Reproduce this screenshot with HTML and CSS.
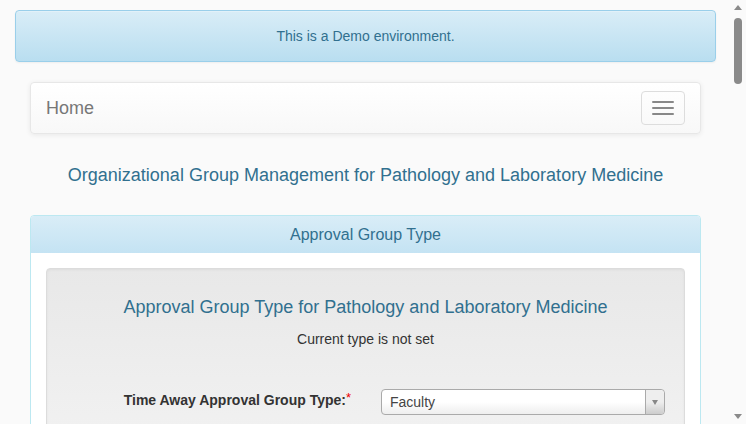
FILE: index.html
```html
<!DOCTYPE html>
<html>
<head>
<meta charset="utf-8">
<link rel="stylesheet" href="styles.css">
</head>
<body>
<div class="viewport">
  <div class="page">
    <div class="alert">This is a Demo environment.</div>
    <div class="main">
      <nav class="navbar">
        <span class="brand">Home</span>
        <button class="toggle" type="button" aria-label="Toggle navigation">
          <span class="bar"></span><span class="bar"></span><span class="bar"></span>
        </button>
      </nav>
      <h2 class="page-title">Organizational Group Management for Pathology and Laboratory Medicine</h2>
      <div class="panel">
        <div class="panel-heading">Approval Group Type</div>
        <div class="panel-body">
          <div class="well">
            <h3 class="well-title">Approval Group Type for Pathology and Laboratory Medicine</h3>
            <p class="current">Current type is not set</p>
            <div class="form-row">
              <label class="form-label">Time Away Approval Group Type:<span class="req">*</span></label>
              <div class="select">
                <span class="select-value">Faculty</span>
                <span class="select-arrow"><span class="caret"></span></span>
              </div>
            </div>
          </div>
        </div>
      </div>
    </div>
  </div>
  <div class="scrollbar">
    <span class="arrow-up"></span>
    <span class="thumb"></span>
    <span class="arrow-down"></span>
  </div>
</div>
</body>
</html>
```
FILE: styles.css
```css
html, body {
  margin: 0;
  padding: 0;
  height: 100%;
  overflow: hidden;
}
body {
  background: #fafafa;
  font-family: "Liberation Sans", Arial, Helvetica, sans-serif;
  font-size: 14px;
  color: #333;
}
.viewport {
  display: flex;
  height: 100%;
}
.page {
  flex: 1;
  padding: 10px 15px 0;
  min-width: 0;
}
.alert {
  height: 50px;
  border: 1px solid #9acfea;
  border-radius: 4px;
  background: linear-gradient(to bottom, #d9edf7 0, #b9def0 100%);
  color: #31708f;
  font-size: 14px;
  display: flex;
  align-items: center;
  justify-content: center;
  box-shadow: inset 0 1px 0 rgba(255,255,255,.25), 0 1px 2px rgba(0,0,0,.05);
  margin-bottom: 20px;
}
.main {
  padding: 0 15px;
}
.navbar {
  height: 50px;
  border: 1px solid #e7e7e7;
  border-radius: 4px;
  background: linear-gradient(to bottom, #fff 0, #f8f8f8 100%);
  box-shadow: inset 0 1px 0 rgba(255,255,255,.15), 0 1px 5px rgba(0,0,0,.075);
  display: flex;
  align-items: center;
  justify-content: space-between;
  padding: 0 15px 0 15px;
  margin-bottom: 0;
}
.brand {
  font-size: 18px;
  color: #777;
}
.toggle {
  width: 44px;
  height: 34px;
  border: 1px solid #ddd;
  border-radius: 4px;
  background: transparent;
  padding: 0;
  display: flex;
  flex-direction: column;
  align-items: center;
  justify-content: center;
  gap: 4px;
}
.bar {
  display: block;
  width: 22px;
  height: 2px;
  background: #888;
  border-radius: 1px;
}
.page-title {
  margin: 31px 0 30px;
  font-size: 18px;
  font-weight: normal;
  line-height: 20px;
  color: #31708f;
  text-align: center;
}
.panel {
  border: 1px solid #bce8f1;
  border-radius: 4px;
  background: #fff;
}
.panel-heading {
  padding: 9px 15px;
  line-height: 19px;
  font-size: 16px;
  color: #31708f;
  text-align: center;
  background: linear-gradient(to bottom, #d9edf7 0, #c4e3f3 100%);
  border-radius: 3px 3px 0 0;
}
.panel-body {
  padding: 15px;
}
.well {
  border: 1px solid #dcdcdc;
  border-radius: 4px;
  background: linear-gradient(to bottom, #e8e8e8 0, #f5f5f5 100%);
  box-shadow: inset 0 1px 3px rgba(0,0,0,.05), 0 1px 0 rgba(255,255,255,.1);
  padding: 19px;
  min-height: 200px;
}
.well-title {
  margin: 9px 0 12px;
  font-size: 18px;
  line-height: 20px;
  font-weight: normal;
  color: #31708f;
  text-align: center;
}
.current {
  margin: 0 0 40px;
  line-height: 20px;
  text-align: center;
}
.form-row {
  display: grid;
  grid-template-columns: 300px 1fr;
  column-gap: 15px;
  align-items: center;
}
.form-label {
  text-align: right;
  padding-right: 15px;
  font-weight: bold;
  line-height: 20px;
  margin-top: -4px;
}
.req {
  color: #e00;
  font-weight: normal;
  vertical-align: top;
  font-size: 13px;
  position: relative;
  top: -2px;
}
.select {
  height: 24px;
  border: 1px solid #aaa;
  border-radius: 4px;
  background: linear-gradient(to bottom, #fff 50%, #eee 100%);
  display: flex;
  align-items: center;
}
.select-value {
  flex: 1;
  padding-left: 8px;
  color: #444;
  font-size: 14px;
  line-height: 24px;
}
.select-arrow {
  width: 18px;
  height: 24px;
  border-left: 1px solid #aaa;
  border-radius: 0 4px 4px 0;
  background: linear-gradient(to bottom, #eee 50%, #ccc 100%);
  display: flex;
  align-items: center;
  justify-content: center;
}
.caret {
  width: 0;
  height: 0;
  border-left: 3px solid transparent;
  border-right: 3px solid transparent;
  border-top: 5px solid #888;
}
.scrollbar {
  width: 15px;
  flex: none;
  position: relative;
  background: #fafafa;
}
.arrow-up, .arrow-down {
  position: absolute;
  left: 3px;
  width: 0;
  height: 0;
  border-left: 4px solid transparent;
  border-right: 4px solid transparent;
}
.arrow-up {
  top: 5px;
  border-bottom: 5px solid #8a8a8a;
}
.arrow-down {
  bottom: 5px;
  border-top: 5px solid #8a8a8a;
}
.thumb {
  position: absolute;
  left: 3px;
  top: 18px;
  width: 8px;
  height: 66px;
  border-radius: 4px;
  background: #8a8a8a;
}
```
